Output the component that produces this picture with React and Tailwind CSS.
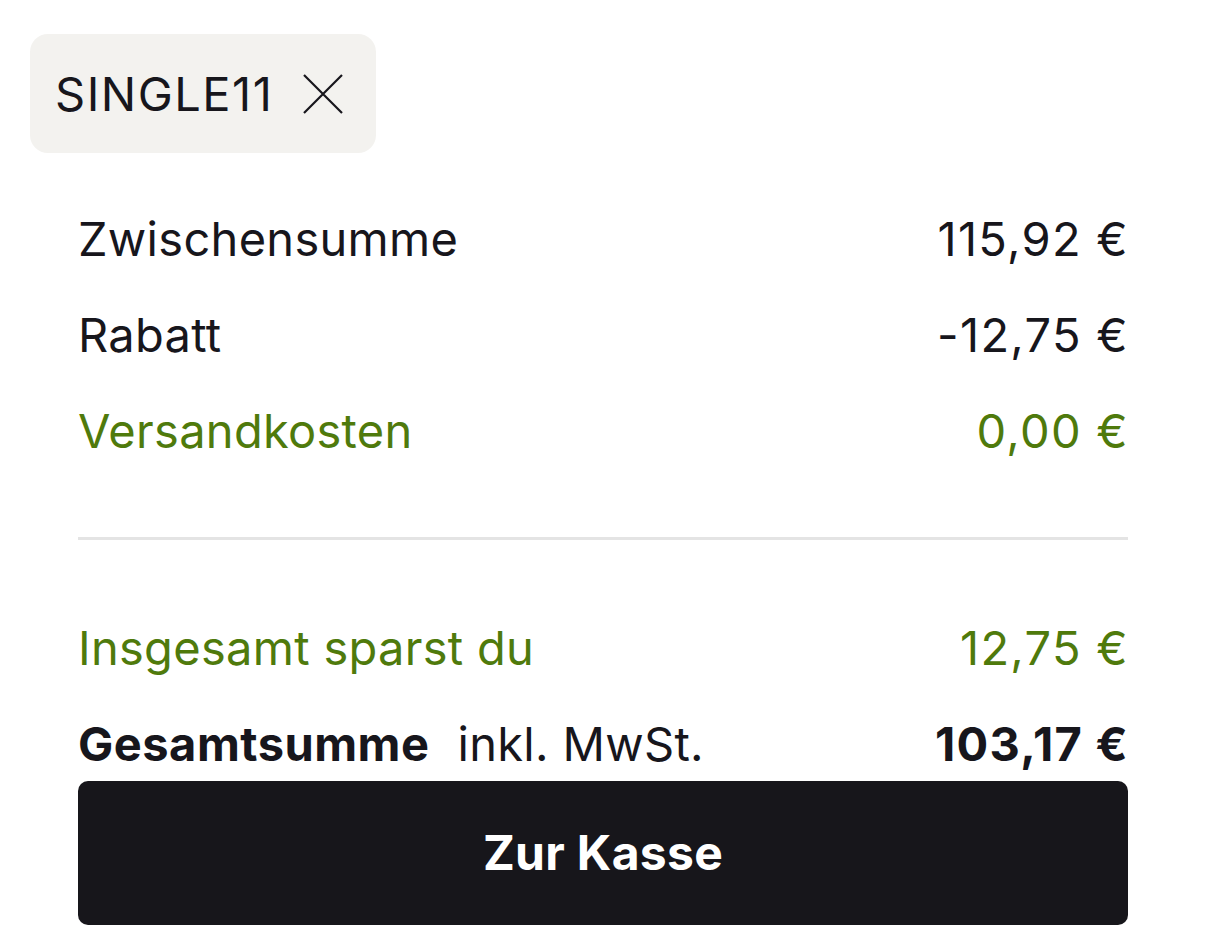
import React from "react";

export default function App() {
  return (
    <div className="w-[1206px] h-[938px] bg-white overflow-hidden text-[#17161c]" style={{ fontFamily: "Inter, 'Liberation Sans', sans-serif" }}>
      <div className="pt-[34px] pl-[30px]">
        <div className="inline-flex items-center h-[119px] w-[346px] rounded-[18px] bg-[#f3f2ef] pl-[25px]">
          <span className="text-[47px] leading-none tracking-[1.5px]">SINGLE11</span>
          <svg className="ml-[30px]" width="40" height="40" viewBox="0 0 40 40" fill="none" stroke="#17161c" strokeWidth="2.2">
            <path d="M1 1 L39 39 M39 1 L1 39" />
          </svg>
        </div>
      </div>
      <div className="mx-[78px] mt-[38px] tracking-[0.3px]">
        <div className="flex justify-between h-[96px] items-center text-[47px]">
          <span>Zwischensumme</span>
          <span className="tracking-[1.3px] -mr-[1px]">115,92 €</span>
        </div>
        <div className="flex justify-between h-[96px] items-center text-[47px]">
          <span>Rabatt</span>
          <span className="tracking-[1.3px] -mr-[1px]">-12,75 €</span>
        </div>
        <div className="flex justify-between h-[96px] items-center text-[47px] text-[#4f7a0c]">
          <span>Versandkosten</span>
          <span className="tracking-[1.3px] -mr-[1px]">0,00 €</span>
        </div>
        <div className="mt-[58px] h-[3px] bg-[#e4e4e4]"></div>
        <div className="mt-[60px] flex justify-between h-[96px] items-center text-[47px] text-[#4f7a0c]">
          <span>Insgesamt sparst du</span>
          <span className="tracking-[1.3px] -mr-[1px]">12,75 €</span>
        </div>
        <div className="mt-[19px] flex justify-between items-baseline text-[47px] leading-[58px]">
          <span>
            <span className="font-bold tracking-[0.5px]">Gesamtsumme</span>
            <span className="ml-[28px]">inkl. MwSt.</span>
          </span>
          <span className="font-bold tracking-[1.3px] -mr-[1px]">103,17 €</span>
        </div>
        <button className="mt-[8px] w-full h-[144px] rounded-[10px] bg-[#17161b] text-white text-[48px] font-bold tracking-[0.3px]">
          Zur Kasse
        </button>
      </div>
    </div>
  );
}
